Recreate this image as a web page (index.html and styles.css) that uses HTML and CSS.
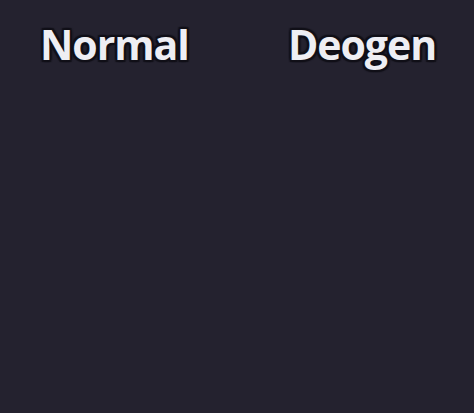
FILE: index.html
```html
<!DOCTYPE html>
<html lang="en">
<head>
    <meta charset="UTF-8">
    <meta name="viewport" content="width=device-width, initial-scale=1.0">
    <title>Normal / Deogen</title>
    <link rel="stylesheet" href="styles.css">
</head>
<body>
    <div class="labels">
        <span class="label">Normal</span>
        <span class="label">Deogen</span>
    </div>
</body>
</html>
```

FILE: styles.css
```css
/* dark panel with two outlined captions */
html, body {
    height: 100%;
}

body {
    margin: 0;
    background-color: #24222f; /* dark violet grey */
    font-family: "Open Sans", "Noto Sans", sans-serif;
}

.labels {
    display: flex;
    gap: 99px;
    padding: 16px 0 0 40px;
}

.label {
    font-size: 41px;
    font-weight: 700;
    line-height: 56px;
    color: #eeeef3;
    letter-spacing: -1px;
    text-shadow:
        -2px -2px 1px #111018,
        2px -2px 1px #111018,
        -2px 2px 1px #111018,
        2px 2px 1px #111018,
        0 2px 1px #111018,
        0 -2px 1px #111018,
        2px 0 1px #111018,
        -2px 0 1px #111018;
}
```
